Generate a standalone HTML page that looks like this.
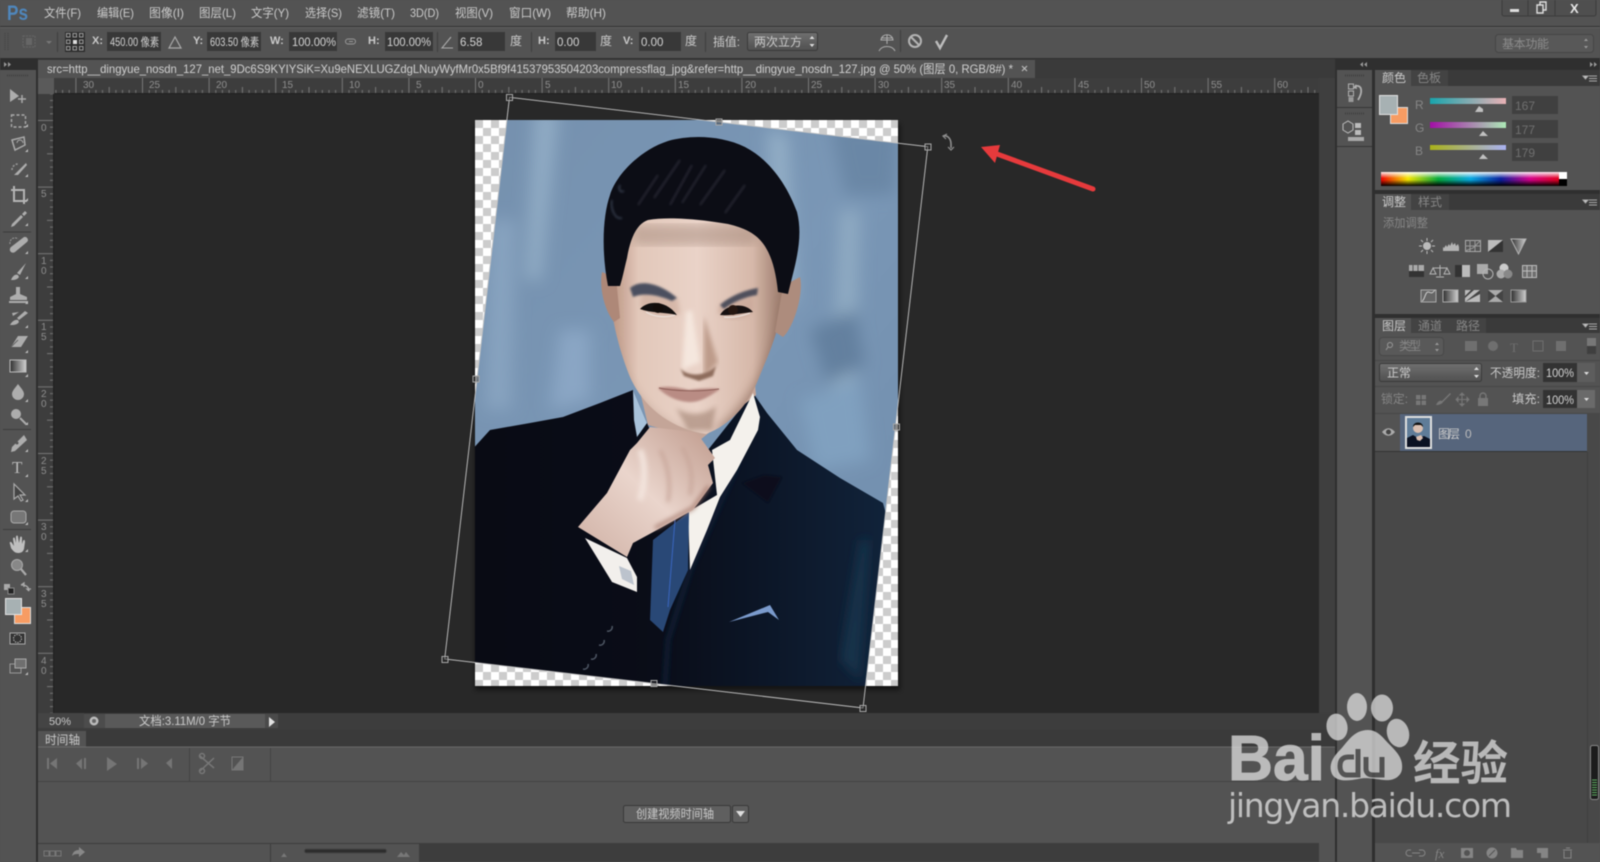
<!DOCTYPE html>
<html><head><meta charset="utf-8"><title>Photoshop</title>
<style>
html,body{margin:0;padding:0;background:#535353;width:1600px;height:862px;overflow:hidden}
svg{display:block;position:absolute;left:0;top:0;filter:blur(.4px)}
text{font-family:"Liberation Sans","Noto Sans CJK SC",sans-serif;font-size:12px;fill:#cacaca}
.d{fill:#868686}
.i{fill:#d4d4d4;font-size:11.5px}
.r{fill:#8e8e8e;font-size:10px}
.ic{fill:#adadad}
.ln{stroke:#bdbdbd;fill:none;stroke-width:1.4}
.dm{fill:#8c8c8c}
</style></head><body>
<svg width="1600" height="862" viewBox="0 0 1600 862" xmlns="http://www.w3.org/2000/svg">
<defs>
<pattern id="chk" patternUnits="userSpaceOnUse" x="475" y="120" width="16" height="16"><rect width="16" height="16" fill="#fff"/><rect width="8" height="8" fill="#ccc"/><rect x="8" y="8" width="8" height="8" fill="#ccc"/></pattern>
<pattern id="rh" patternUnits="userSpaceOnUse" x="475" y="78" width="66.6" height="16"><path d="M.5 0V16M33.8 9V16M7.2 12V16M13.8 12V16M20.5 12V16M27.1 12V16M40.5 12V16M47.1 12V16M53.8 12V16M60.4 12V16" stroke="#858585" stroke-width="1" fill="none"/></pattern>
<pattern id="rv" patternUnits="userSpaceOnUse" x="38" y="120" width="16" height="66.6"><path d="M0 .5H16M9 33.8H16M12 7.2H16M12 13.8H16M12 20.5H16M12 27.1H16M12 40.5H16M12 47.1H16M12 53.8H16M12 60.4H16" stroke="#858585" stroke-width="1" fill="none"/></pattern>
<linearGradient id="bgb" x1="0" y1="0" x2="1" y2="1"><stop offset="0" stop-color="#7590ad"/><stop offset=".5" stop-color="#7a97b6"/><stop offset="1" stop-color="#6f8cab"/></linearGradient>
<linearGradient id="suit" x1="0" y1="0" x2="1" y2="0"><stop offset="0" stop-color="#090b14"/><stop offset=".45" stop-color="#0a0d18"/><stop offset=".7" stop-color="#0c1627"/><stop offset="1" stop-color="#11233a"/></linearGradient>
<linearGradient id="skin" x1="0" y1="0" x2="1" y2="0"><stop offset="0" stop-color="#b8917f"/><stop offset=".16" stop-color="#e2c8ba"/><stop offset=".5" stop-color="#ead3c8"/><stop offset=".82" stop-color="#d6b8a9"/><stop offset="1" stop-color="#967667"/></linearGradient>
<linearGradient id="hand" x1="0" y1="1" x2="1" y2="0"><stop offset="0" stop-color="#cfb0a4"/><stop offset=".5" stop-color="#ead5cc"/><stop offset="1" stop-color="#bf9a8c"/></linearGradient>
<linearGradient id="spec" x1="0" y1="0" x2="1" y2="0"><stop offset="0" stop-color="#ee0000"/><stop offset=".15" stop-color="#f5e600"/><stop offset=".32" stop-color="#05a83c"/><stop offset=".5" stop-color="#06a8e0"/><stop offset=".67" stop-color="#0a1f9c"/><stop offset=".83" stop-color="#d3008a"/><stop offset="1" stop-color="#e30018"/></linearGradient>
<linearGradient id="specv" x1="0" y1="0" x2="0" y2="1"><stop offset="0" stop-color="#fff" stop-opacity=".95"/><stop offset=".45" stop-color="#fff" stop-opacity="0"/><stop offset=".55" stop-color="#000" stop-opacity="0"/><stop offset="1" stop-color="#000" stop-opacity="1"/></linearGradient>
<linearGradient id="sr" x1="0" y1="0" x2="1" y2="0"><stop offset="0" stop-color="#18a5ad"/><stop offset="1" stop-color="#e9b1b5"/></linearGradient>
<linearGradient id="sg" x1="0" y1="0" x2="1" y2="0"><stop offset="0" stop-color="#a30fa6"/><stop offset="1" stop-color="#ace9b6"/></linearGradient>
<linearGradient id="sb" x1="0" y1="0" x2="1" y2="0"><stop offset="0" stop-color="#a9b119"/><stop offset="1" stop-color="#a9b1f2"/></linearGradient>
<linearGradient id="btn" x1="0" y1="0" x2="0" y2="1"><stop offset="0" stop-color="#707070"/><stop offset="1" stop-color="#505050"/></linearGradient>
<linearGradient id="gr" x1="0" y1="0" x2="1" y2="0"><stop offset="0" stop-color="#2f2f2f"/><stop offset="1" stop-color="#d0d0d0"/></linearGradient>
<filter id="b1"><feGaussianBlur stdDeviation="1"/></filter>
<filter id="b2"><feGaussianBlur stdDeviation="2.5"/></filter>
<filter id="b3"><feGaussianBlur stdDeviation="8"/></filter>
<filter id="b4"><feGaussianBlur stdDeviation="5"/></filter>
<clipPath id="cv"><rect x="475" y="120" width="423" height="566"/></clipPath>
<clipPath id="qd"><polygon points="509.5,97.3 927.8,146.7 863,708 444.7,659"/></clipPath>
<clipPath id="fc"><path d="M612 262C606 300 616 340 628 372C640 404 668 428 706 434C730 425 748 405 758 380C768 355 781 330 784 290C786 258 760 210 700 205C650 205 616 225 612 262Z"/></clipPath>
</defs>

<!-- base -->
<rect width="1600" height="862" fill="#535353"/>
<rect y="26" width="1600" height="1" fill="#333"/>
<rect y="27" width="1600" height="1" fill="#606060"/>
<rect y="58" width="1600" height="1" fill="#2f2f2f"/>

<!-- menu -->
<text x="7" y="20" style="font-size:21px;font-weight:bold;fill:#4f86bb" textLength="21" lengthAdjust="spacingAndGlyphs">Ps</text>
<text x="44" y="17" textLength="37" lengthAdjust="spacingAndGlyphs">文件(F)</text>
<text x="97" y="17" textLength="37" lengthAdjust="spacingAndGlyphs">编辑(E)</text>
<text x="149" y="17" textLength="35" lengthAdjust="spacingAndGlyphs">图像(I)</text>
<text x="199" y="17" textLength="37" lengthAdjust="spacingAndGlyphs">图层(L)</text>
<text x="251" y="17" textLength="38" lengthAdjust="spacingAndGlyphs">文字(Y)</text>
<text x="305" y="17" textLength="37" lengthAdjust="spacingAndGlyphs">选择(S)</text>
<text x="357" y="17" textLength="38" lengthAdjust="spacingAndGlyphs">滤镜(T)</text>
<text x="410" y="17" textLength="29" lengthAdjust="spacingAndGlyphs">3D(D)</text>
<text x="455" y="17" textLength="38" lengthAdjust="spacingAndGlyphs">视图(V)</text>
<text x="509" y="17" textLength="42" lengthAdjust="spacingAndGlyphs">窗口(W)</text>
<text x="566" y="17" textLength="40" lengthAdjust="spacingAndGlyphs">帮助(H)</text>
<!-- window buttons -->
<rect x="1502" y="-3" width="94" height="19" rx="2" fill="#4f4f4f" stroke="#3b3b3b"/>
<path d="M1528 0V16M1555 0V16" stroke="#3d3d3d"/>
<rect x="1510" y="9" width="9" height="3" fill="#ddd"/>
<path d="M1537 5h6v8h-6zM1540 5V2h6v8h-3" fill="none" stroke="#ddd" stroke-width="1.4"/>
<text x="1570" y="13" style="font-size:13px;font-weight:bold;fill:#e8e8e8">X</text>

<!-- options bar -->
<path d="M5 33V51M8 33V51" stroke="#3f3f3f" stroke-dasharray="1 1"/>
<rect x="23" y="36" width="12" height="11" fill="none" stroke="#666" stroke-dasharray="2 1"/>
<rect x="26" y="38" width="6" height="7" fill="#666"/>
<path d="M46 41h6l-3 3z" fill="#777"/>
<path d="M57.5 32V52" stroke="#3e3e3e"/>
<rect x="65" y="32" width="20" height="20" fill="#2d2d2d"/>
<g fill="none" stroke="#999" stroke-width="1"><rect x="66.5" y="33.5" width="3.5" height="3.5"/><rect x="73" y="33.5" width="3.5" height="3.5"/><rect x="79.5" y="33.5" width="3.5" height="3.5"/><rect x="66.5" y="40" width="3.5" height="3.5"/><rect x="79.5" y="40" width="3.5" height="3.5"/><rect x="66.5" y="46.5" width="3.5" height="3.5"/><rect x="73" y="46.5" width="3.5" height="3.5"/><rect x="79.5" y="46.5" width="3.5" height="3.5"/></g>
<rect x="73" y="40" width="4" height="4" fill="#ddd"/>
<text x="92" y="44" style="font-size:11px;font-weight:bold">X:</text>
<rect x="107" y="32" width="54" height="19" fill="#383838"/>
<text x="110" y="46" class="i" textLength="49" lengthAdjust="spacingAndGlyphs">450.00 像素</text>
<path d="M175 37l-6 11h12z" fill="none" stroke="#aaa" stroke-width="1.2"/>
<text x="193" y="44" style="font-size:11px;font-weight:bold">Y:</text>
<rect x="207" y="32" width="54" height="19" fill="#383838"/>
<text x="210" y="46" class="i" textLength="49" lengthAdjust="spacingAndGlyphs">603.50 像素</text>
<text x="270" y="44" style="font-size:11px;font-weight:bold">W:</text>
<rect x="289" y="32" width="48" height="19" fill="#383838"/>
<text x="292" y="46" class="i" textLength="44" lengthAdjust="spacingAndGlyphs">100.00%</text>
<path d="M352 39h-3a2.5 2.5 0 0 0 0 5h3M350 41.5h4M352 39h2a2.5 2.5 0 0 1 0 5h-2" fill="none" stroke="#999" transform="translate(-1 0)"/>
<text x="368" y="44" style="font-size:11px;font-weight:bold">H:</text>
<rect x="385" y="32" width="48" height="19" fill="#383838"/>
<text x="387" y="46" class="i" textLength="44" lengthAdjust="spacingAndGlyphs">100.00%</text>
<path d="M437.5 32V52" stroke="#3e3e3e"/>
<path d="M451 37l-9 11h11" fill="none" stroke="#aaa" stroke-width="1.1"/>
<rect x="458" y="32" width="47" height="19" fill="#383838"/>
<text x="460" y="46" class="i">6.58</text>
<text x="510" y="45">度</text>
<path d="M531.5 32V52" stroke="#3e3e3e"/>
<text x="538" y="44" style="font-size:11px;font-weight:bold">H:</text>
<rect x="555" y="32" width="41" height="19" fill="#383838"/>
<text x="557" y="46" class="i">0.00</text>
<text x="600" y="45">度</text>
<text x="623" y="44" style="font-size:11px;font-weight:bold">V:</text>
<rect x="639" y="32" width="42" height="19" fill="#383838"/>
<text x="641" y="46" class="i">0.00</text>
<text x="685" y="45">度</text>
<path d="M705.5 32V52" stroke="#3e3e3e"/>
<text x="713" y="46" textLength="27" lengthAdjust="spacingAndGlyphs">插值:</text>
<rect x="747.5" y="32.5" width="70" height="18" rx="2" fill="url(#btn)" stroke="#3a3a3a"/>
<text x="754" y="46" textLength="48">两次立方</text>
<path d="M810 39l2.5-3 2.5 3zM810 44l2.5 3 2.5-3z" fill="#ddd" transform="translate(-.5 0)"/>
<g fill="none" stroke="#aaa" stroke-width="1.1"><path d="M881 40c1-7 11-7 12 0zM887 35v5M881 38h12M887 40v4M879 51c3-6 13-6 16 0"/></g>
<path d="M900.5 30V52" stroke="#3e3e3e"/>
<circle cx="915" cy="41" r="6" fill="none" stroke="#b4b4b4" stroke-width="2"/>
<path d="M911 37l8 8" stroke="#b4b4b4" stroke-width="2"/>
<path d="M936 41l4 7 7-13" fill="none" stroke="#bcbcbc" stroke-width="2.4"/>
<rect x="1495.5" y="34.5" width="98" height="18" rx="3" fill="#585858" stroke="#464646"/>
<text x="1502" y="48" class="dm" textLength="47">基本功能</text>
<path d="M1584 41l2-2.500 2 2.500zM1584 46l2 2.500 2-2.500z" fill="#999"/>

<!-- tab bar strip -->
<rect x="0" y="59" width="1600" height="19" fill="#3a3a3a"/>
<rect x="0" y="59" width="37" height="11" fill="#2e2e2e"/>
<path d="M4 62l3 2.500-3 2.500zM8 62l3 2.500-3 2.500z" fill="#999"/>
<rect x="38" y="60" width="997" height="18" fill="#535353"/>
<text x="47" y="73" textLength="966" lengthAdjust="spacingAndGlyphs" style="fill:#d0d0d0">src=http__dingyue_nosdn_127_net_9Dc6S9KYIYSiK=Xu9eNEXLUGZdgLNuyWyfMr0x5Bf9f41537953504203compressflag_jpg&amp;refer=http__dingyue_nosdn_127.jpg  @  50%  (图层 0, RGB/8#) *</text>
<path d="M1022 66l5 5m0-5l-5 5" stroke="#bbb" stroke-width="1.2"/>

<!-- left toolbar -->
<rect x="0" y="70" width="36" height="792" fill="#535353"/>
<rect x="36" y="59" width="2" height="803" fill="#2e2e2e"/>
<path d="M7 75.5H28" stroke="#404040" stroke-dasharray="1 1" stroke-width="2"/>

<!-- canvas + rulers -->
<rect x="38" y="78" width="1281" height="635" fill="#282828"/>
<rect x="38" y="78" width="1281" height="16" fill="#3d3d3d"/>
<rect x="38" y="78" width="16" height="635" fill="#3d3d3d"/>
<rect x="38" y="78" width="16" height="16" fill="#5a5a5a"/>
<rect x="54" y="78" width="1265" height="16" fill="url(#rh)" opacity=".8"/>
<rect x="38" y="94" width="16" height="619" fill="url(#rv)" opacity=".8"/>
<rect x="54" y="93" width="1265" height="1" fill="#222"/>
<rect x="53" y="94" width="1" height="619" fill="#222"/>
<g class="r">
<text class="r" x="83" y="88">30</text><text class="r" x="149" y="88">25</text><text class="r" x="216" y="88">20</text><text class="r" x="282" y="88">15</text><text class="r" x="349" y="88">10</text><text class="r" x="416" y="88">5</text><text class="r" x="478" y="88">0</text><text class="r" x="545" y="88">5</text><text class="r" x="611" y="88">10</text><text class="r" x="678" y="88">15</text><text class="r" x="745" y="88">20</text><text class="r" x="811" y="88">25</text><text class="r" x="878" y="88">30</text><text class="r" x="944" y="88">35</text><text class="r" x="1011" y="88">40</text><text class="r" x="1078" y="88">45</text><text class="r" x="1144" y="88">50</text><text class="r" x="1211" y="88">55</text><text class="r" x="1277" y="88">60</text>
<text class="r" x="41" y="131">0</text><text class="r" x="41" y="197">5</text><text class="r" x="41" y="264">1</text><text class="r" x="41" y="274">0</text><text class="r" x="41" y="330">1</text><text class="r" x="41" y="340">5</text><text class="r" x="41" y="397">2</text><text class="r" x="41" y="407">0</text><text class="r" x="41" y="464">2</text><text class="r" x="41" y="474">5</text><text class="r" x="41" y="530">3</text><text class="r" x="41" y="540">0</text><text class="r" x="41" y="597">3</text><text class="r" x="41" y="607">5</text><text class="r" x="41" y="664">4</text><text class="r" x="41" y="674">0</text>
</g>
<rect x="1319" y="78" width="16" height="635" fill="#3f3f3f"/>

<!-- document -->
<rect x="475" y="124" width="425" height="566" fill="#000" opacity=".5" filter="url(#b2)"/>
<rect x="475" y="120" width="423" height="566" fill="url(#chk)"/>
<g clip-path="url(#cv)"><g clip-path="url(#qd)">
<rect x="440" y="90" width="490" height="620" fill="url(#bgb)"/>
<g filter="url(#b3)">
<path d="M535 110l24 0 -18 170 -16 0z" fill="#90abc4"/>
<path d="M768 130l20 5 8 170 -24 -10z" fill="#93aec6"/>
<path d="M840 210l20 0 -5 180 -24 0z" fill="#8faac2"/>
<path d="M490 220l26 0 -5 190 -26 0z" fill="#87a3bf"/>
<path d="M810 330l45 -20 10 55 -38 18z" fill="#64809f"/>
<path d="M560 330l30 0 0 70 -40 10z" fill="#8aa6c4"/>
<path d="M800 400l60 -20 10 80 -55 10z" fill="#80a0bf"/>
<path d="M830 125l70 0 -5 70 -50 0z" fill="#6a87a6"/>
</g>
<!-- suit -->
<path d="M470 452L490 430L530 423L563 417L600 403L633 390L650 430L700 460L753 393L767 413L797 450L840 478L883 503L886 514L870 720H470Z" fill="url(#suit)"/>
<path d="M753 398L735 470L690 570L668 640L664 700" stroke="#0f1c30" stroke-width="5" fill="none" filter="url(#b2)"/>
<path d="M768 503l-26 -20 22 -8 18 2z" fill="#07101d" filter="url(#b1)"/>
<path d="M840 660l20 -120 10 0 -10 140z" fill="#17304a" filter="url(#b4)"/>
<!-- neck -->
<path d="M636 375L648 425L700 440L756 395L752 350Z" fill="#c4a598"/>
<!-- shirts -->
<path d="M633 390L647 423L637 437L634 420Z" fill="#a8c2da"/>
<path d="M753 393L760 417L758 430L737 470L720 497L707 530L690 570L688 512L717 495L712 450L730 440Z" fill="#f4f1ec"/>
<!-- tie -->
<path d="M653 540L689 512L688 570L670 610L663 632L650 620Z" fill="#294876"/>
<path d="M675 520L668 607" stroke="#3a66bf" stroke-width="1"/>
<!-- hand -->
<path d="M585 538L627 558L637 577L637 592L612 582Z" fill="#f2efec"/>
<path d="M619 566l12 5 3 14-12-6z" fill="#bcc3cd"/>
<path d="M637 443L650 427L677 430L697 433L715 458L708 465L713 483L693 510L657 530L633 543L627 557L578 527L607 493L630 450Z" fill="url(#hand)"/>
<g filter="url(#b2)" fill="none">
<path d="M660 450c6 10 12 30 8 52M682 447c8 14 12 28 8 48" stroke="#c6a498" stroke-width="3"/>
<path d="M640 450c5 12 6 30 0 50" stroke="#f3e4dd" stroke-width="6"/>
<path d="M655 528l38-20 16-22" stroke="#a3776a" stroke-width="3"/>
</g>
<!-- pocket, buttons -->
<path d="M729 622L770 605L779 620L768 612Z" fill="#7b9bcd"/>
<path d="M612 626a4 4 0 0 1-5 5M604 640a4 4 0 0 1-5 5M596 654a4 4 0 0 1-5 5M588 664a4 4 0 0 1-5 5" stroke="#4d5663" stroke-width="1.5" fill="none"/>
<!-- face -->
<path d="M612 262C606 300 616 340 628 372C640 404 668 428 706 434C730 425 748 405 758 380C768 355 781 330 784 290C786 258 760 210 700 205C650 205 616 225 612 262Z" fill="url(#skin)"/>
<g clip-path="url(#fc)">
<path d="M612 340C630 400 660 430 706 436L706 446L600 420Z" fill="#9f7f70" opacity=".55" filter="url(#b4)"/>
<path d="M782 300C775 350 755 400 712 432L760 430L795 330Z" fill="#8d6c5d" opacity=".7" filter="url(#b4)"/>
<path d="M676 408c12 8 28 8 40-2l-4 24-24 0z" fill="#a98b7c" opacity=".7" filter="url(#b2)"/>
<path d="M630 225h130l-5 20h-120z" fill="#a48a7d" opacity=".5" filter="url(#b4)"/>
<path d="M640 305c10 14 30 14 40 8l-2-14-36-8z" fill="#cba999" opacity=".6" filter="url(#b2)"/>
<path d="M718 312c8 10 28 8 36-2l0-14-34 8z" fill="#c5a293" opacity=".6" filter="url(#b2)"/>
</g>
<path d="M602 272c-3 14 2 38 12 50l6-4-4-40z" fill="#ae8878"/>
<path d="M800 277c4 16-6 50-17 60l-8-5 8-46z" fill="#ad8c7d"/>
<path d="M692 310L700 362L682 370L686 312Z" fill="#f5e7de" filter="url(#b2)"/>
<path d="M704 316l14 46-14 16z" fill="#bd9b8a" filter="url(#b2)"/>
<path d="M680 368c6 8 24 10 36-2l-3 10-14 5-15-5z" fill="#8d6c5c" filter="url(#b1)"/>
<!-- brows -->
<path d="M630 288C640 279 660 283 677 298L672 301C656 294 642 293 633 297Z" fill="#4c505f" filter="url(#b1)"/>
<path d="M720 305C730 296 745 290 758 288L757 295C745 297 733 302 724 309Z" fill="#50505c" filter="url(#b1)"/>
<!-- eyes -->
<path d="M640 309C648 300 666 300 677 315C664 312 650 313 640 309Z" fill="#120f0f"/>
<path d="M646 312c8 5 20 6 29 3" stroke="#e9ddd6" stroke-width="1.4" fill="none"/>
<circle cx="658" cy="308" r="5" fill="#120c0a"/>
<path d="M720 315C726 304 745 302 753 312C742 313 730 316 720 315Z" fill="#161010"/>
<path d="M724 317c8 1 18-1 26-4" stroke="#e9ddd6" stroke-width="1.4" fill="none"/>
<circle cx="733" cy="310" r="5" fill="#261610"/>
<!-- lips -->
<path d="M658 388C668 385 680 388 689 390C700 388 712 388 720 389C710 396 700 403 688 402C676 401 666 396 658 388Z" fill="#b98c84" filter="url(#b1)"/>
<path d="M659 388c14 3 40 4 60 1" stroke="#8d5f58" stroke-width="1" fill="none"/>
<!-- hair -->
<path d="M608 286C601 250 603 215 610 195C616 175 640 150 668 141C690 135 720 135 745 147C770 160 787 185 797 212C804 240 794 268 788 294L778 292C776 272 772 258 766 248C758 234 745 228 728 224C705 220 670 216 648 220C636 224 630 240 627 258C624 270 623 276 620 286Z" fill="#0c0d15"/>
<path d="M680 160l-26 38M692 165l-22 40M706 165l-24 38M725 170l-25 35M745 185l-20 28M658 175l-20 30" stroke="#262733" stroke-width="2" fill="none" filter="url(#b1)"/>
<path d="M612 200c-2 6 2 20 10 18M620 185c-2 4 0 8 4 6" stroke="#3a4252" stroke-width="1.5" fill="none" filter="url(#b1)"/>
</g></g>

<!-- transform box -->
<polygon points="509.5,97.3 927.8,146.7 863,708 444.7,659" fill="none" stroke="#c4c4c4" stroke-width=".9"/>
<g fill="#282828" fill-opacity=".4" stroke="#a8a8a8" stroke-width="1">
<rect x="506.5" y="94.5" width="6" height="6"/><rect x="716" y="119" width="6" height="6"/><rect x="925" y="144" width="6" height="6"/><rect x="893.5" y="424" width="6" height="6"/><rect x="860" y="705.5" width="6" height="6"/><rect x="651" y="680.5" width="6" height="6"/><rect x="442" y="656.5" width="6" height="6"/><rect x="473" y="376" width="6" height="6"/>
</g>
<!-- rotate cursor -->
<path d="M943 136c5-1 8 3 8 8l0 4" fill="none" stroke="#8f8f8f" stroke-width="1.6"/>
<path d="M947 134l-4 2 3 3M948 147l3 3 3-3" fill="none" stroke="#8f8f8f" stroke-width="1.2"/>
<!-- red arrow -->
<path d="M997 154L1093 189" stroke="#e63a3c" stroke-width="5" stroke-linecap="round"/>
<polygon points="981,147 1000,145 995,163" fill="#e63a3c"/>

<!-- tools -->
<g>
<path d="M10 89l0 13 9-6z" class="ic"/><path d="M22 95v8M18 99h8" stroke="#aaa" stroke-width="1.5"/>
<rect x="11.5" y="115" width="14" height="12" fill="none" stroke="#aaa" stroke-width="1.4" stroke-dasharray="3 2"/>
<path d="M12 140l12-3 1 8-10 5z" fill="none" stroke="#aaa" stroke-width="1.5"/><path d="M17 143a3 3 0 0 1 6 0" stroke="#aaa" fill="none"/>
<path d="M12 170a6 6 0 0 1 6-6" fill="none" stroke="#999" stroke-dasharray="2 1.500" stroke-width="1.5"/><path d="M26 163l-8 8-4 4 4 0 9-10z" class="ic"/>
<path d="M14 186V201H27M11 190H24V204" fill="none" stroke="#b4b4b4" stroke-width="2"/>
<path d="M25 211l-3 3 2 2 3-3zM21 215l-9 9-1 3 3-1 9-9z" class="ic"/>
<path d="M3 232H31" stroke="#3c3c3c"/>
<path d="M24 237a3 3 0 0 1 3 5l-12 10a3 3 0 0 1-4-5z" class="ic"/><path d="M10 244a5 5 0 0 1 8-5" fill="none" stroke="#999" stroke-dasharray="2 1"/>
<path d="M26 263l-9 10 3 2zM11 280c2-5 5-6 7-5l1 2c-2 3-5 3-8 3z" class="ic"/>
<path d="M16 287h4v7l7 3v3H10v-3l6-3zM9 301h19v2H9z" class="ic"/>
<path d="M25 311l-8 7 2 2 9-7zM10 325c2-4 6-6 8-5l1 2c-2 3-5 3-9 3zM12 313l7-1-6 4z" class="ic"/>
<path d="M18 336h10l-7 11H11z" class="ic"/><path d="M11 347l7-7" stroke="#666"/>
<rect x="10" y="360" width="16" height="12" fill="url(#gr)" stroke="#bbb"/>
<path d="M18 384c3 4 6 7 6 10a6 6 0 0 1-12 0c0-3 3-6 6-10z" class="ic"/>
<circle cx="16" cy="414" r="5" class="ic"/><path d="M20 418l6 6" stroke="#aaa" stroke-width="2"/>
<path d="M3 429.5H31" stroke="#3c3c3c"/>
<path d="M24 435l3 5-12 11-4 1 1-5z" class="ic"/><circle cx="17" cy="443" r="1.500" fill="#555"/>
<text x="12" y="473" style="font-family:'Liberation Serif',serif;font-size:17px;fill:#bbb">T</text>
<path d="M14 484v15l4-3 3 5 2-1-3-5h5z" fill="#444" stroke="#aaa" stroke-width="1.2"/>
<rect x="11" y="511" width="15" height="12" rx="3" fill="#777" stroke="#aaa"/>
<path d="M3 529.5H31" stroke="#3c3c3c"/>
<path d="M10 544c-1-2 1-3 2-1l2 3-1-7c0-2 2-2 2 0l1 4v-6c0-2 2-2 2 0l1 6 1-5c0-2 2-2 2 0v6l1-3c1-2 2-1 2 1l-1 7c-1 3-3 4-6 4-3 0-5-2-7-5z" fill="#bfbfbf"/>
<circle cx="17" cy="565" r="5.500" fill="#888" stroke="#aaa"/><path d="M21 569l5 6" stroke="#aaa" stroke-width="2.200"/>
<rect x="4" y="584" width="6" height="6" fill="#aaa"/><rect x="8" y="588" width="6" height="6" fill="#222" stroke="#888"/>
<path d="M21 585c4 0 8 1 8 6M21 585l3-2v4M29 591l-2-2h4" fill="none" stroke="#aaa" stroke-width="1.3"/>
<rect x="14.5" y="607.5" width="16" height="16" fill="#f79c63" stroke="#ddd"/>
<rect x="5.5" y="598.5" width="16" height="16" fill="#a7b1b3" stroke="#e4e4e4"/>
<rect x="10" y="633" width="15" height="11" fill="#333" stroke="#aaa"/><circle cx="17.5" cy="638.5" r="4" fill="none" stroke="#bbb" stroke-dasharray="1.500 1"/>
<rect x="10" y="664" width="11" height="9" fill="none" stroke="#999"/><rect x="15" y="659" width="11" height="9" fill="#6f6f6f" stroke="#aaa"/>
<!-- tool flyout marks -->
<path d="M28 127v-3l-3 3zM28 152v-3l-3 3zM28 177v-3l-3 3zM28 201v-3l-3 3zM28 226v-3l-3 3zM28 254v-3l-3 3zM28 279v-3l-3 3zM28 304v-3l-3 3zM28 328v-3l-3 3zM28 353v-3l-3 3zM28 377v-3l-3 3zM28 402v-3l-3 3zM28 425v-3l-3 3zM28 452v-3l-3 3zM28 477v-3l-3 3zM28 502v-3l-3 3zM28 525v-3l-3 3zM28 552v-3l-3 3zM28 675v-3l-3 3z" fill="#bbb"/>
</g>

<!-- status bar -->
<rect x="38" y="713" width="1297" height="17" fill="#3d3d3d"/>
<rect x="38" y="713" width="46" height="15" fill="#444"/>
<text x="49" y="725" textLength="22" lengthAdjust="spacingAndGlyphs" style="font-size:11px">50%</text>
<rect x="84" y="714" width="21" height="14" fill="#4c4c4c"/>
<circle cx="94" cy="721" r="4.500" fill="#bbb"/><circle cx="94" cy="721" r="2" fill="#666"/>
<rect x="105" y="714" width="160" height="14" fill="#595959"/>
<text x="139" y="725" textLength="92" lengthAdjust="spacingAndGlyphs">文档:3.11M/0 字节</text>
<rect x="265" y="714" width="13" height="14" fill="#4a4a4a"/>
<path d="M269 717l6 5-6 5z" fill="#e2e2e2"/>

<!-- timeline -->
<rect x="38" y="730" width="1299" height="17" fill="#3a3a3a"/>
<rect x="38" y="731" width="48" height="16" fill="#535353"/>
<text x="45" y="744" textLength="35" lengthAdjust="spacingAndGlyphs">时间轴</text>
<rect x="38" y="747" width="1297" height="97" fill="#535353"/>
<rect x="38" y="781" width="1281" height="1" fill="#434343"/>
<path d="M38 747H1335" stroke="#6a6a6a"/>
<path d="M189.5 748V781M270.5 748V781" stroke="#434343"/>
<g fill="#757575">
<path d="M47 758h2v11h-2zM50 763.5l7-5.500v11z"/>
<path d="M76 763.5l6-5v11zM84 758h2v11h-2z"/>
<path d="M107 757l10 7-10 7z"/>
<path d="M137 758h2v11h-2zM141 758l7 5.500-7 5.500z"/>
<path d="M166 763l6-5v11z"/>
<path d="M200 756l14 12M200 771l14-13" stroke="#777" stroke-width="1.5" fill="none"/><circle cx="202" cy="756" r="2.500" fill="none" stroke="#777" stroke-width="1.5"/><circle cx="202" cy="771" r="2.500" fill="none" stroke="#777" stroke-width="1.5"/>
<rect x="232" y="757" width="11" height="13" fill="none" stroke="#777"/><path d="M232 770l11-13v13z"/>
</g>
<rect x="623.5" y="805.5" width="107" height="17" rx="2" fill="#5f5f5f" stroke="#383838"/>
<text x="636" y="818" textLength="78" lengthAdjust="spacingAndGlyphs">创建视频时间轴</text>
<rect x="732.5" y="805.5" width="16" height="17" rx="2" fill="#5f5f5f" stroke="#383838"/>
<path d="M736 811h9l-4.500 6z" fill="#ddd"/>
<rect x="38" y="843" width="1281" height="19" fill="#3d3d3d"/>
<rect x="38" y="844" width="232" height="18" fill="#535353"/>
<rect x="271" y="844" width="148" height="18" fill="#535353"/>
<rect x="44" y="851" width="5" height="5" fill="none" stroke="#777"/><rect x="50" y="851" width="5" height="5" fill="none" stroke="#777"/><rect x="56" y="851" width="5" height="5" fill="none" stroke="#777"/>
<path d="M72 856c1-5 4-6 7-6v-3l6 5-6 5v-3c-3 0-5 0-7 2z" fill="#888"/>
<path d="M281 857l3-4 3 4z" fill="#777"/>
<rect x="304.5" y="849" width="82" height="4" rx="2" fill="#2d2d2d" stroke="#444"/>
<path d="M397 857l4-5 3 3 2-3 4 5z" fill="#777"/>
<rect x="1319" y="843" width="16" height="19" fill="#535353"/>

<!-- dock -->
<rect x="1335" y="59" width="265" height="11" fill="#2f2f2f"/>
<rect x="1335" y="70" width="2" height="792" fill="#2f2f2f"/>
<rect x="1337" y="70" width="35" height="792" fill="#535353"/>
<rect x="1372" y="70" width="3" height="792" fill="#2f2f2f"/>
<path d="M1367 62l-3 2.500 3 2.500zM1363 62l-3 2.500 3 2.500zM1590 62l3 2.500-3 2.500zM1594 62l3 2.500-3 2.500z" fill="#999"/>
<path d="M1345 75.5H1364M1345 113.5H1364" stroke="#3f3f3f" stroke-dasharray="1 1" stroke-width="2"/>
<path d="M1337 107.5H1372M1337 146.5H1372" stroke="#363636"/>
<g fill="none" stroke="#b0b0b0"><rect x="1348.5" y="84" width="5" height="5"/><rect x="1348.5" y="91" width="5" height="5"/></g>
<rect x="1348.5" y="97" width="5" height="5" fill="#999"/>
<path d="M1356 86c6-1 7 6 2 14" fill="none" stroke="#b0b0b0" stroke-width="1.8"/>
<path d="M1353 88l3-4 1 5z" fill="#b0b0b0"/>
<path d="M1353 124l-5-3-5 3v6l5 3 5-3z" fill="none" stroke="#bbb"/><rect x="1355" y="123" width="6" height="5" fill="#bbb"/><rect x="1355" y="130" width="6" height="5" fill="#bbb"/>
<rect x="1348" y="137" width="16" height="4" fill="#aaa"/>

<!-- right panel base -->
<rect x="1375" y="70" width="225" height="792" fill="#484848"/>
<!-- color -->
<rect x="1375" y="70" width="225" height="16" fill="#3a3a3a"/>
<rect x="1375" y="70" width="36" height="16" fill="#535353"/>
<rect x="1411" y="70" width="37" height="16" fill="#434343"/>
<text x="1382" y="82" textLength="24">颜色</text>
<text x="1417" y="82" class="d" textLength="24">色板</text>
<path d="M1583 76h5l-2.500 3zM1589 76h8M1589 78.500h8M1589 81h8" stroke="#aaa" fill="#ccc" stroke-width="1"/>
<rect x="1375" y="86" width="225" height="104" fill="#535353"/>
<rect x="1390.500" y="107.500" width="17" height="16" fill="#f79c63" stroke="#ddd"/>
<rect x="1379.500" y="95.500" width="18" height="19" fill="#a7b1b3" stroke="#e2e2e2"/>
<rect x="1430" y="98" width="76" height="6" fill="url(#sr)"/>
<rect x="1430" y="122" width="76" height="6" fill="url(#sg)"/>
<rect x="1430" y="145" width="76" height="5" fill="url(#sb)"/>
<text x="1415" y="109" class="d">R</text><text x="1415" y="132" class="d">G</text><text x="1415" y="155" class="d">B</text>
<path d="M1475 112l4-6 4 3v3zM1475 112h9M1479 136l4-5 5 5zM1479 159l4-5 5 5z" fill="#c0c0c0"/>
<rect x="1512" y="96" width="46" height="18" fill="#404040"/><rect x="1512" y="120" width="46" height="18" fill="#404040"/><rect x="1512" y="143" width="46" height="18" fill="#404040"/>
<text x="1515" y="110" style="fill:#6f6f6f">167</text><text x="1515" y="134" style="fill:#6f6f6f">177</text><text x="1515" y="157" style="fill:#6f6f6f">179</text>
<rect x="1381" y="172" width="179" height="14" fill="url(#spec)"/>
<rect x="1381" y="172" width="179" height="14" fill="url(#specv)"/>
<rect x="1559" y="172" width="8" height="7" fill="#fff"/><rect x="1559" y="179" width="8" height="7" fill="#000"/>
<rect x="1375" y="190" width="225" height="4" fill="#2f2f2f"/>
<!-- adjust -->
<rect x="1375" y="194" width="225" height="16" fill="#3a3a3a"/>
<rect x="1375" y="194" width="36" height="16" fill="#535353"/>
<rect x="1411" y="194" width="38" height="16" fill="#434343"/>
<text x="1382" y="206" textLength="24">调整</text>
<text x="1418" y="206" class="d" textLength="24">样式</text>
<path d="M1583 200h5l-2.500 3zM1589 200h8M1589 202.500h8M1589 205h8" stroke="#aaa" fill="#ccc" stroke-width="1"/>
<rect x="1375" y="210" width="225" height="105" fill="#535353"/>
<text x="1383" y="227" class="d" textLength="45" lengthAdjust="spacingAndGlyphs">添加调整</text>
<g>
<circle cx="1427" cy="246" r="4" fill="#bbb"/><path d="M1427 238v3M1427 251v3M1419 246h3M1432 246h3M1421 240l2 2M1431 250l2 2M1421 252l2-2M1431 242l2-2" stroke="#bbb"/>
<path d="M1443 251v-4l1 1 2-3 1 2 2-3 1 2 2-4 1 3 2-2 1 3 2-2 1 3v4z" fill="#b4b4b4"/>
<rect x="1465.500" y="240.500" width="15" height="11" fill="#555" stroke="#aaa"/><path d="M1465 251l8-3 8-8M1470 240v11M1475 240v11M1465 246h15" stroke="#999" fill="none"/>
<rect x="1488" y="240" width="15" height="12" fill="#bbb"/><path d="M1488 252l15-12v12z" fill="#333"/>
<path d="M1511 239h15l-7.500 15z" fill="url(#gr)" stroke="#b4b4b4"/>
<rect x="1409" y="265" width="15" height="12" fill="#aaa"/><rect x="1409" y="271" width="15" height="6" fill="#333"/><path d="M1413 265v6M1418 265v6" stroke="#555"/>
<path d="M1440 265v11M1433 268h14M1433 268l-3 6h6zM1447 268l-3 6h6zM1436 277h8" stroke="#b4b4b4" fill="none"/>
<rect x="1455" y="265" width="15" height="12" fill="#bbb"/><rect x="1455" y="265" width="7" height="12" fill="#333"/>
<rect x="1477" y="264" width="11" height="10" fill="#aaa"/><circle cx="1488" cy="274" r="5" fill="none" stroke="#b4b4b4"/>
<circle cx="1504" cy="268" r="4.500" fill="#ccc"/><circle cx="1501" cy="274" r="4.500" fill="#aaa"/><circle cx="1508" cy="274" r="4.500" fill="#888"/>
<rect x="1522.500" y="265.500" width="14" height="12" fill="#6f6f6f" stroke="#bbb"/><path d="M1527 265v12M1532 265v12M1522 271h14" stroke="#bbb"/>
<rect x="1421" y="290" width="15" height="12" fill="#666" stroke="#aaa"/><path d="M1422 301c3-1 3-9 6-9s3 3 7-2" stroke="#ccc" fill="none"/>
<rect x="1443" y="290" width="15" height="12" fill="url(#gr)" stroke="#aaa"/>
<rect x="1465" y="290" width="15" height="12" fill="#bbb"/><path d="M1465 302l15-12v4l-15 8zM1465 296l6-6h3l-9 8z" fill="#444"/>
<rect x="1488" y="290" width="15" height="12" fill="#aaa"/><path d="M1488 290l7.500 6-7.500 6zM1503 290l-7.500 6 7.500 6z" fill="#444"/>
<rect x="1511" y="290" width="15" height="12" fill="url(#gr)" stroke="#999"/>
</g>
<rect x="1375" y="314" width="225" height="4" fill="#2f2f2f"/>
<!-- layers -->
<rect x="1375" y="318" width="225" height="15" fill="#3a3a3a"/>
<rect x="1375" y="318" width="36" height="15" fill="#535353"/>
<rect x="1411" y="318" width="37" height="15" fill="#434343"/>
<rect x="1448" y="318" width="38" height="15" fill="#434343"/>
<text x="1382" y="330" textLength="24">图层</text>
<text x="1418" y="330" class="d" textLength="24">通道</text>
<text x="1456" y="330" class="d" textLength="24">路径</text>
<path d="M1583 324h5l-2.500 3zM1589 324h8M1589 326.500h8M1589 329h8" stroke="#aaa" fill="#ccc" stroke-width="1"/>
<rect x="1375" y="333" width="225" height="81" fill="#535353"/>
<rect x="1379.500" y="337.500" width="64" height="18" rx="3" fill="#595959" stroke="#484848"/>
<circle cx="1390" cy="345" r="2.500" fill="none" stroke="#999"/><path d="M1388 347l-2 3" stroke="#999"/>
<text x="1399" y="350" class="d" textLength="22">类型</text>
<path d="M1435 345l2-2.500 2 2.500zM1435 349l2 2.500 2-2.500z" fill="#999"/>
<g fill="#6f6f6f"><rect x="1465" y="341" width="12" height="10"/><circle cx="1493" cy="346" r="5"/><text x="1510" y="352" style="font-family:'Liberation Serif',serif;font-size:13px;fill:#6f6f6f">T</text><rect x="1533" y="341" width="10" height="10" fill="none" stroke="#6f6f6f"/><rect x="1556" y="341" width="10" height="10"/></g>
<rect x="1587" y="338" width="9" height="8" fill="#777"/><rect x="1587" y="346" width="9" height="8" fill="#3f3f3f"/>
<path d="M1375 360.500H1600M1375 386.500H1600M1375 413.500H1600" stroke="#474747"/>
<rect x="1379.500" y="363.500" width="102" height="18" rx="2" fill="url(#btn)" stroke="#3a3a3a"/>
<text x="1387" y="377">正常</text>
<path d="M1474 370l2.500-3 2.500 3zM1474 375l2.500 3 2.500-3z" fill="#ddd"/>
<text x="1490" y="377" textLength="50" lengthAdjust="spacingAndGlyphs">不透明度:</text>
<rect x="1543" y="363" width="34" height="19" fill="#333"/>
<text x="1546" y="377" class="i" textLength="28" lengthAdjust="spacingAndGlyphs">100%</text>
<rect x="1577" y="363" width="18" height="19" fill="#5d5d5d"/><path d="M1584 372h5l-2.500 3z" fill="#ddd"/>
<text x="1381" y="403" class="d" textLength="27" lengthAdjust="spacingAndGlyphs">锁定:</text>
<rect x="1416" y="395" width="10" height="10" fill="#777"/><path d="M1421 395v10M1416 400h10" stroke="#4d4d4d"/>
<path d="M1436 405c2-4 4-5 6-4l8-8 1 1-8 8c-1 2-4 3-7 3z" fill="#777"/>
<path d="M1462 393v13M1456 399.500h13M1462 393l-2 2h4zM1462 406l-2-2h4zM1456 399.500l2-2v4zM1469 399.500l-2-2v4z" stroke="#777" fill="#777"/>
<rect x="1478" y="398" width="10" height="8" fill="#777"/><path d="M1480 398v-2a3 3 0 0 1 6 0v2" fill="none" stroke="#777" stroke-width="1.4"/>
<text x="1512" y="403" textLength="28" lengthAdjust="spacingAndGlyphs">填充:</text>
<rect x="1543" y="390" width="34" height="18" fill="#333"/>
<text x="1546" y="404" class="i" textLength="28" lengthAdjust="spacingAndGlyphs">100%</text>
<rect x="1577" y="390" width="18" height="18" fill="#6a6a6a"/><path d="M1584 398h5l-2.500 3z" fill="#ddd"/>
<rect x="1375" y="414" width="212" height="37" fill="#56657c"/>
<rect x="1375" y="414" width="25" height="37" fill="#535353"/>
<rect x="1375" y="451" width="212" height="1" fill="#333"/>
<path d="M1382 432c4-5 9-5 13 0-4 5-9 5-13 0z" fill="#aaa"/><circle cx="1388.500" cy="432" r="2.500" fill="#444"/>
<rect x="1405" y="416" width="27" height="33" fill="#dfdfdf"/>
<rect x="1407" y="418" width="23" height="29" fill="#5f7c98"/>
<path d="M1407 438l6-3 5 3 6-2 6 3v8h-23z" fill="#0b1222"/>
<circle cx="1418" cy="428" r="5" fill="#d9bfb1"/><path d="M1413 427c0-6 10-6 10 0l-2-2h-6z" fill="#111"/>
<path d="M1416 437l5-2 2 3-3 3-3-1z" fill="#d9bfb1"/>
<text x="1438" y="438" textLength="22">图层</text>
<text x="1465" y="438" class="d" style="fill:#bbb">0</text>
<!-- panel bottom -->
<rect x="1587" y="452" width="1" height="392" fill="#404040"/>
<rect x="1375" y="843" width="225" height="19" fill="#535353"/>
<g fill="#858585">
<path d="M1411 850h-2a3 3 0 0 0 0 6h3M1421 850h-2M1420 850h2a3 3 0 0 1 0 6h-3M1412 853h8" stroke="#858585" fill="none"/>
<text x="1435" y="858" style="font-family:'Liberation Serif',serif;font-style:italic;font-size:13px;fill:#858585">fx</text>
<rect x="1461" y="848" width="12" height="10"/><circle cx="1467" cy="853" r="3" fill="#535353"/>
<circle cx="1492" cy="853" r="5.500"/><path d="M1489 856l6-6" stroke="#535353"/>
<path d="M1511 848h5l1 2h6v8h-12z"/>
<path d="M1537 848h11v10h-7v-5h-4z"/>
<path d="M1563 850h9M1564 851v7h7v-7M1566 848h4" stroke="#858585" fill="none"/>
</g>
<!-- green meter -->
<rect x="1590.500" y="745.500" width="8" height="54" rx="2" fill="#1c1c1c" stroke="#888"/>
<path d="M1592 780h5M1592 782.500h5M1592 785h5M1592 787.500h5M1592 790h5M1592 792.500h5M1592 795h5" stroke="#5dac61"/>

<!-- watermark -->
<g opacity=".75">
<text x="1228" y="780" textLength="97" lengthAdjust="spacingAndGlyphs" style="font-size:64px;font-weight:bold;fill:#dedede;stroke:#dedede;stroke-width:1px">Bai</text>
<g fill="#dedede">
<ellipse cx="1357" cy="707" rx="10" ry="14"/><ellipse cx="1382" cy="708" rx="11" ry="13.500"/><ellipse cx="1337" cy="727" rx="10.500" ry="13.500" transform="rotate(-10 1337 727)"/><ellipse cx="1398" cy="733" rx="11" ry="14.500" transform="rotate(-15 1398 733)"/>
<path d="M1368 730c10 0 15 8 22 15 8 8 13 14 12 24-1 8-9 12-18 11-10-1-18-3-26-1-10 2-22 3-26-5-4-9 1-17 8-24 7-7 13-20 28-20z"/>
</g>
<path d="M1358 749v26h-11c-4 0-7-3-7-9s3-9 8-9h6M1366 757v12c0 4 3 6 7 6h9v-18" fill="none" stroke="#555" stroke-width="5"/>
<text x="1413" y="780" textLength="95" lengthAdjust="spacingAndGlyphs" style="font-size:47px;font-weight:bold;fill:#dedede">经验</text>
<text x="1228" y="817" textLength="284" lengthAdjust="spacing" style="font-family:'DejaVu Sans',sans-serif;font-size:33px;fill:#e4e4e4">jingyan.baidu.com</text>
</g>
</svg>
</body></html>
